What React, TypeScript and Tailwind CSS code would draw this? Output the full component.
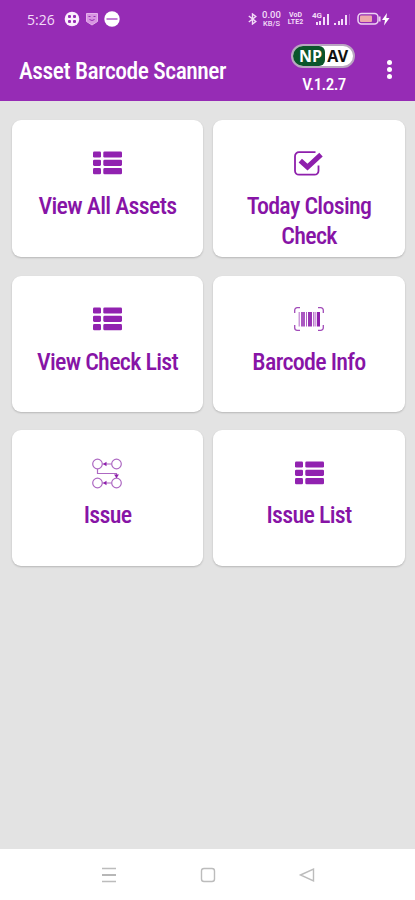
import React from 'react';

const ListIcon = () => (
  <svg width="29" height="24" viewBox="0 0 29 24" fill="#9122b0">
    {[0.5, 8.8, 17.1].map((y) => (
      <g key={y}>
        <rect x="0" y={y} width="8" height="6.1" rx="1.3" />
        <rect x="10.3" y={y} width="18.7" height="6.1" rx="1.3" />
      </g>
    ))}
  </svg>
);

const CheckIcon = () => (
  <svg width="29" height="25" viewBox="0 0 29 25" fill="none" stroke="#8e1fac" className="-ml-px">
    <path d="M21.5 1.2H5a4 4 0 0 0-4 4v14.5a4 4 0 0 0 4 4h15.5a4 4 0 0 0 4-4V14.5" strokeWidth="1.8" />
    <path d="M6.3 9.7l7.2 6.5L27 3.6" strokeWidth="5" />
  </svg>
);

const BarcodeIcon = () => (
  <svg width="30" height="24" viewBox="0 0 30 24" fill="#8e1fac">
    <path d="M.7 6V3.2A2.5 2.5 0 0 1 3.2.7H6M24 .7h2.8a2.5 2.5 0 0 1 2.5 2.5V6M29.3 18v2.8a2.5 2.5 0 0 1-2.5 2.5H24M6 23.3H3.2a2.5 2.5 0 0 1-2.5-2.5V18" fill="none" stroke="#a14bb8" strokeWidth="1.3" />
    <rect x="4.5" y="5" width="1.5" height="14.5" opacity=".45" />
    <rect x="7" y="5" width="4" height="14.5" opacity=".75" />
    <rect x="12" y="5" width="1" height="14.5" opacity=".7" />
    <rect x="14" y="5" width="4" height="14.5" opacity=".9" />
    <rect x="19" y="5" width="1.5" height="14.5" opacity=".6" />
    <rect x="21.3" y="5" width="1" height="14.5" opacity=".6" />
    <rect x="23" y="5" width="3" height="14.5" />
  </svg>
);

const IssueIcon = () => (
  <svg width="30" height="31" viewBox="0 0 30 31" fill="none" stroke="#ad68c2" strokeWidth="1.2" className="-ml-px">
    <circle cx="5.5" cy="6" r="4.8" />
    <circle cx="24.5" cy="6" r="4.8" />
    <circle cx="5.5" cy="25" r="4.8" />
    <circle cx="24.5" cy="25" r="4.8" />
    <path d="M10.5 6h9M10.5 25h9M5.5 11v4.5h19V20" />
    <path d="M11 6l3.5-2.2v4.4zM11 25l3.5-2.2v4.4zM24.5 20l-2.5-3.5h5z" fill="#8e1fac" stroke="none" />
  </svg>
);

const rows = [
  {
    cardClass: 'h-[137px] gap-3',
    items: [
      { label: 'View All Assets', icon: <ListIcon /> },
      { label: 'Today Closing Check', icon: <CheckIcon /> },
    ],
  },
  {
    cardClass: 'mt-[19px] h-[136px] gap-3',
    items: [
      { label: 'View Check List', icon: <ListIcon /> },
      { label: 'Barcode Info', icon: <BarcodeIcon /> },
    ],
  },
  {
    cardClass: 'mt-[18px] h-[136px] gap-[11px]',
    items: [
      { label: 'Issue', icon: <IssueIcon /> },
      { label: 'Issue List', icon: <ListIcon /> },
    ],
  },
];

function StatusBar() {
  return (
    <div className="flex h-[38px] items-center pl-[27px] text-[#f3dcf8]">
      <span className="w-[37px] font-['Open_Sans',sans-serif] text-[14px]">5:26</span>
      <svg width="57" height="16" viewBox="0 0 57 16" className="shrink-0">
        <circle cx="8" cy="8" r="7.3" fill="#fbeffd" />
        <g fill="#962cb5">
          <rect x="4" y="4" width="3" height="3" rx="1" />
          <rect x="9" y="4" width="3" height="3" rx="1" />
          <rect x="4" y="9" width="3" height="3" rx="1" />
          <rect x="9" y="9" width="3" height="3" rx="1" />
        </g>
        <path d="M22.5 2.5h11v8l-5.5 3.5-5.5-3.5z" fill="#d894e2" stroke="#e4b2ec" />
        <path d="M24.5 5.5h2M29.5 5.5h2M25.5 8.5l2.5 1 2.5-1" stroke="#962cb5" fill="none" />
        <circle cx="48" cy="8" r="7.7" fill="#fff" />
        <path d="M42.5 8h11" stroke="#b45fcb" strokeWidth="1.6" />
      </svg>
      <svg width="9" height="12" viewBox="0 0 9 12" fill="none" stroke="#f3dcf8" strokeWidth="1.4" className="ml-[127px] shrink-0">
        <path d="M.8 3l7 5.5L4.5 11V1l3.3 2.5-7 5.5" />
      </svg>
      <div className="ml-1 w-[21px] shrink-0 text-center font-['Roboto',sans-serif] font-medium">
        <div className="text-[9.5px] leading-[8px]">0.00</div>
        <div className="mt-px text-[7.5px] leading-[7px]">KB/S</div>
      </div>
      <div className="ml-[5px] w-[17px] shrink-0 text-center font-['Roboto',sans-serif] text-[7px] font-bold leading-[7px]">
        <div>VoD</div>
        <div>LTE2</div>
      </div>
      <div className="ml-2 flex h-[14px] shrink-0 items-end">
        <span className="-mr-1.5 self-start font-['Roboto',sans-serif] text-[8px] font-bold leading-[8px]">4G</span>
        <svg width="44" height="13" viewBox="0 0 44 13" fill="#f3dcf8">
          <rect x="0" y="9" width="2" height="3" />
          <rect x="3" y="8" width="2" height="4" />
          <rect x="7" y="4" width="2" height="8" />
          <rect x="11" y="1" width="2" height="11" />
          <rect x="18" y="10" width="2" height="2" />
          <rect x="22" y="8" width="2" height="4" />
          <rect x="25" y="6" width="2" height="6" />
          <rect x="29" y="2" width="2" height="10" />
          <rect x="33" y="1" width="1" height="11" opacity=".3" />
        </svg>
      </div>
      <svg width="34" height="14" viewBox="0 0 34 14" className="-ml-[3px] shrink-0">
        <rect x="1" y="1.5" width="20" height="10.5" rx="3.5" fill="none" stroke="#eed2f3" strokeWidth="1.5" />
        <rect x="3" y="3.5" width="12" height="6.5" rx="1" fill="#eda9ac" />
        <path d="M22.8 4.5v5" stroke="#eed2f3" strokeWidth="1.5" />
        <path d="M30 1l-5 7h3l-1 5.5 5.5-7.500h-3.2z" fill="#fff" />
      </svg>
    </div>
  );
}

function Header() {
  return (
    <div className="h-[101px] bg-[#962cb5]">
      <StatusBar />
      <div className="flex h-[63px] text-white">
        <h1 className="ml-[19px] w-[272px] whitespace-nowrap pt-[19px] font-['Roboto_Condensed','Roboto',sans-serif] text-[23.5px] font-medium leading-7 tracking-[-0.48px] [font-stretch:75%]">
          Asset Barcode Scanner
        </h1>
        <div className="w-[65px] pt-[6px] text-center">
          <div className="flex h-6 w-[64px] overflow-hidden rounded-full border-2 border-[#b9a5c1] bg-white font-['Open_Sans',sans-serif] text-[16px] font-bold leading-[20px]">
            <span className="w-[32px] rounded-r-md bg-[#0b552b] pl-[3px] text-white">NP</span>
            <span className="w-[25px] text-[#111] tracking-[-0.5px]">AV</span>
          </div>
          <div className="mt-1 pl-px font-['Roboto_Condensed','Roboto',sans-serif] text-[17px] font-medium leading-6 tracking-[-0.6px] [font-stretch:75%]">V.1.2.7</div>
        </div>
        <div className="ml-[31px] flex flex-col gap-[2px] pt-[22px]">
          <span className="size-[5px] rounded-full bg-white" />
          <span className="size-[5px] rounded-full bg-white" />
          <span className="size-[5px] rounded-full bg-white" />
        </div>
      </div>
    </div>
  );
}

export default function App() {
  return (
    <div className="flex h-[900px] w-[415px] flex-col overflow-hidden bg-[#e3e3e3]">
      <Header />
      <div className="flex-1 pl-3 pt-[19px]">
        {rows.map((row, i) => (
          <div key={i} className="grid grid-cols-[191px_192px] gap-x-[10px]">
            {row.items.map((item) => (
              <div key={item.label} className={`${row.cardClass} flex flex-col items-center rounded-[9px] bg-white pt-[27px] shadow-[0_1px_2px_rgba(0,0,0,0.2)]`}>
                <div className="flex h-8 items-center">{item.icon}</div>
                <div className="w-[150px] text-center font-['Roboto_Condensed','Roboto',sans-serif] text-[24px] font-[480] leading-[30px] tracking-[-0.7px] text-[#8714a6] [font-stretch:75%]">
                  {item.label}
                </div>
              </div>
            ))}
          </div>
        ))}
      </div>
      <div className="flex h-[51px] items-center bg-white pl-[101px]">
        <svg width="214" height="18" viewBox="0 0 214 18" fill="none" stroke="#bcbcbc" strokeWidth="1.4">
          <path d="M1 2.5h14M1 15.5h14" />
          <path d="M1 9h14" stroke="#999" />
          <rect x="100.5" y="2.5" width="13" height="13" rx="2.5" />
          <path d="M199.5 9l13-6v12z" />
        </svg>
      </div>
    </div>
  );
}
